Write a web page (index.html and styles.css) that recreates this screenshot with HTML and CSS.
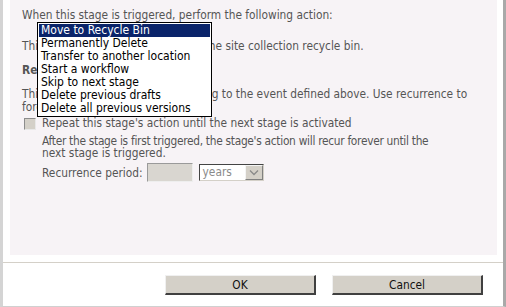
FILE: index.html
```html
<!DOCTYPE html>
<html>
<head>
<meta charset="utf-8">
<link rel="stylesheet" href="styles.css">
</head>
<body>
<div class="frame">
  <div class="panel">
    <p class="line first">When this stage is triggered, perform the following action:</p>
    <p class="line p2">This action will move the items to the site collection recycle bin.</p>
    <p class="line heading">Recurrence</p>
    <p class="line p3">This stage's action will run according to the event defined above. Use recurrence to<br>force the stage's action to repeat.</p>
    <div class="check-row">
      <span class="checkbox"></span>
      <span>Repeat this stage's action until the next stage is activated</span>
    </div>
    <div class="indent">
      <p class="note"><span class="tight">After the stage is first triggered, the stage's action will recur forever until the</span><br>next stage is triggered.</p>
      <div class="period-row">
        <span>Recurrence period:</span>
        <span class="num-input"></span>
        <span class="select"><span class="select-text">years</span><span class="select-btn"><svg width="10" height="7" viewBox="0 0 10 7"><path d="M1 1.5 L5 5.5 L9 1.5" fill="none" stroke="#8a8a8a" stroke-width="1.3"/></svg></span></span>
      </div>
    </div>
    <ul class="dropdown">
      <li class="selected">Move to Recycle Bin</li>
      <li>Permanently Delete</li>
      <li>Transfer to another location</li>
      <li>Start a workflow</li>
      <li>Skip to next stage</li>
      <li>Delete previous drafts</li>
      <li>Delete all previous versions</li>
    </ul>
  </div>
  <div class="footer">
    <button class="btn">OK</button>
    <button class="btn">Cancel</button>
  </div>
</div>
</body>
</html>
```
FILE: styles.css
```css
* { box-sizing: border-box; }
html, body { margin: 0; padding: 0; background: #fff; }
body {
  font-family: "DejaVu Sans Condensed", "DejaVu Sans", sans-serif;
  font-size: 11.8px;
  color: #555;
}
.frame {
  width: 506px;
  height: 307px;
  border-left: 3px solid #d4d4d4;
  border-right: 3px solid #a9a9a9;
  border-bottom: 1px solid #d0d0d0;
  position: relative;
  overflow: hidden;
}
.panel {
  position: relative;
  margin: 0 6px 0 7px;
  height: 255px;
  background: #f7f3f6;
  padding: 9px 0 0 12px;
}
.line { margin: 0; line-height: 13px; white-space: nowrap; }
.p2 { margin-top: 18px; }
.heading { margin-top: 11px; font-weight: bold; }
.p3 { margin-top: 11px; }
.check-row {
  display: flex;
  align-items: center;
  gap: 6px;
  margin-top: 3px;
  margin-left: 2px;
  height: 13px;
  line-height: 13px;
  white-space: nowrap;
}
.checkbox {
  width: 12px;
  height: 12px;
  background: #d4d0c8;
  border: 1px solid #8c8c8c;
  border-right-color: #e8e8e8;
  border-bottom-color: #e8e8e8;
  flex: none;
}
.indent { padding-left: 20px; margin-top: 5px; }
.note { margin: 0; line-height: 12px; white-space: nowrap; }
.tight { letter-spacing: -0.28px; }
.period-row {
  display: flex;
  align-items: center;
  margin-top: 4px;
  height: 19px;
}
.num-input {
  width: 46px;
  height: 19px;
  margin-left: 4px;
  background: #d9d6d0;
  border: 1px solid #9a9a9a;
  border-right-color: #eeeeee;
  border-bottom-color: #eeeeee;
}
.select {
  display: flex;
  width: 65px;
  height: 17px;
  margin-left: 6px;
  background: #fff;
  border: 1px solid #444;
  border-right-color: #d4d0c8;
  border-bottom-color: #d4d0c8;
}
.select-text { flex: 1; color: #8a8a8a; padding-left: 3px; line-height: 15px; }
.select-btn {
  width: 18px;
  background: #d4d0c8;
  border: 1px solid #f4f4f4;
  border-right-color: #808080;
  border-bottom-color: #808080;
  display: flex;
  align-items: center;
  justify-content: center;
}
.dropdown {
  position: absolute;
  left: 27px;
  top: 22px;
  width: 175px;
  margin: 0;
  padding: 1px;
  list-style: none;
  background: #fff;
  border: 1px solid #000;
  color: #000;
  font-size: 12px;
}
.dropdown li {
  height: 13px;
  line-height: 13px;
  padding-left: 2px;
  white-space: nowrap;
}
.dropdown li.selected { background: #0a246a; color: #fff; }
.footer {
  border-top: 1px solid #d4d0c8;
  margin-top: 7px;
  display: flex;
  justify-content: flex-end;
  gap: 16px;
  padding: 12px 20px 0 0;
}
.btn {
  width: 151px;
  height: 20px;
  background: #d4d0c8;
  border: 1px solid #f0f0f0;
  border-right: 2px solid #404040;
  border-bottom: 2px solid #404040;
  font-family: "DejaVu Sans Condensed", "DejaVu Sans", sans-serif;
  font-size: 11.8px;
  color: #111;
  padding: 0;
}
```
